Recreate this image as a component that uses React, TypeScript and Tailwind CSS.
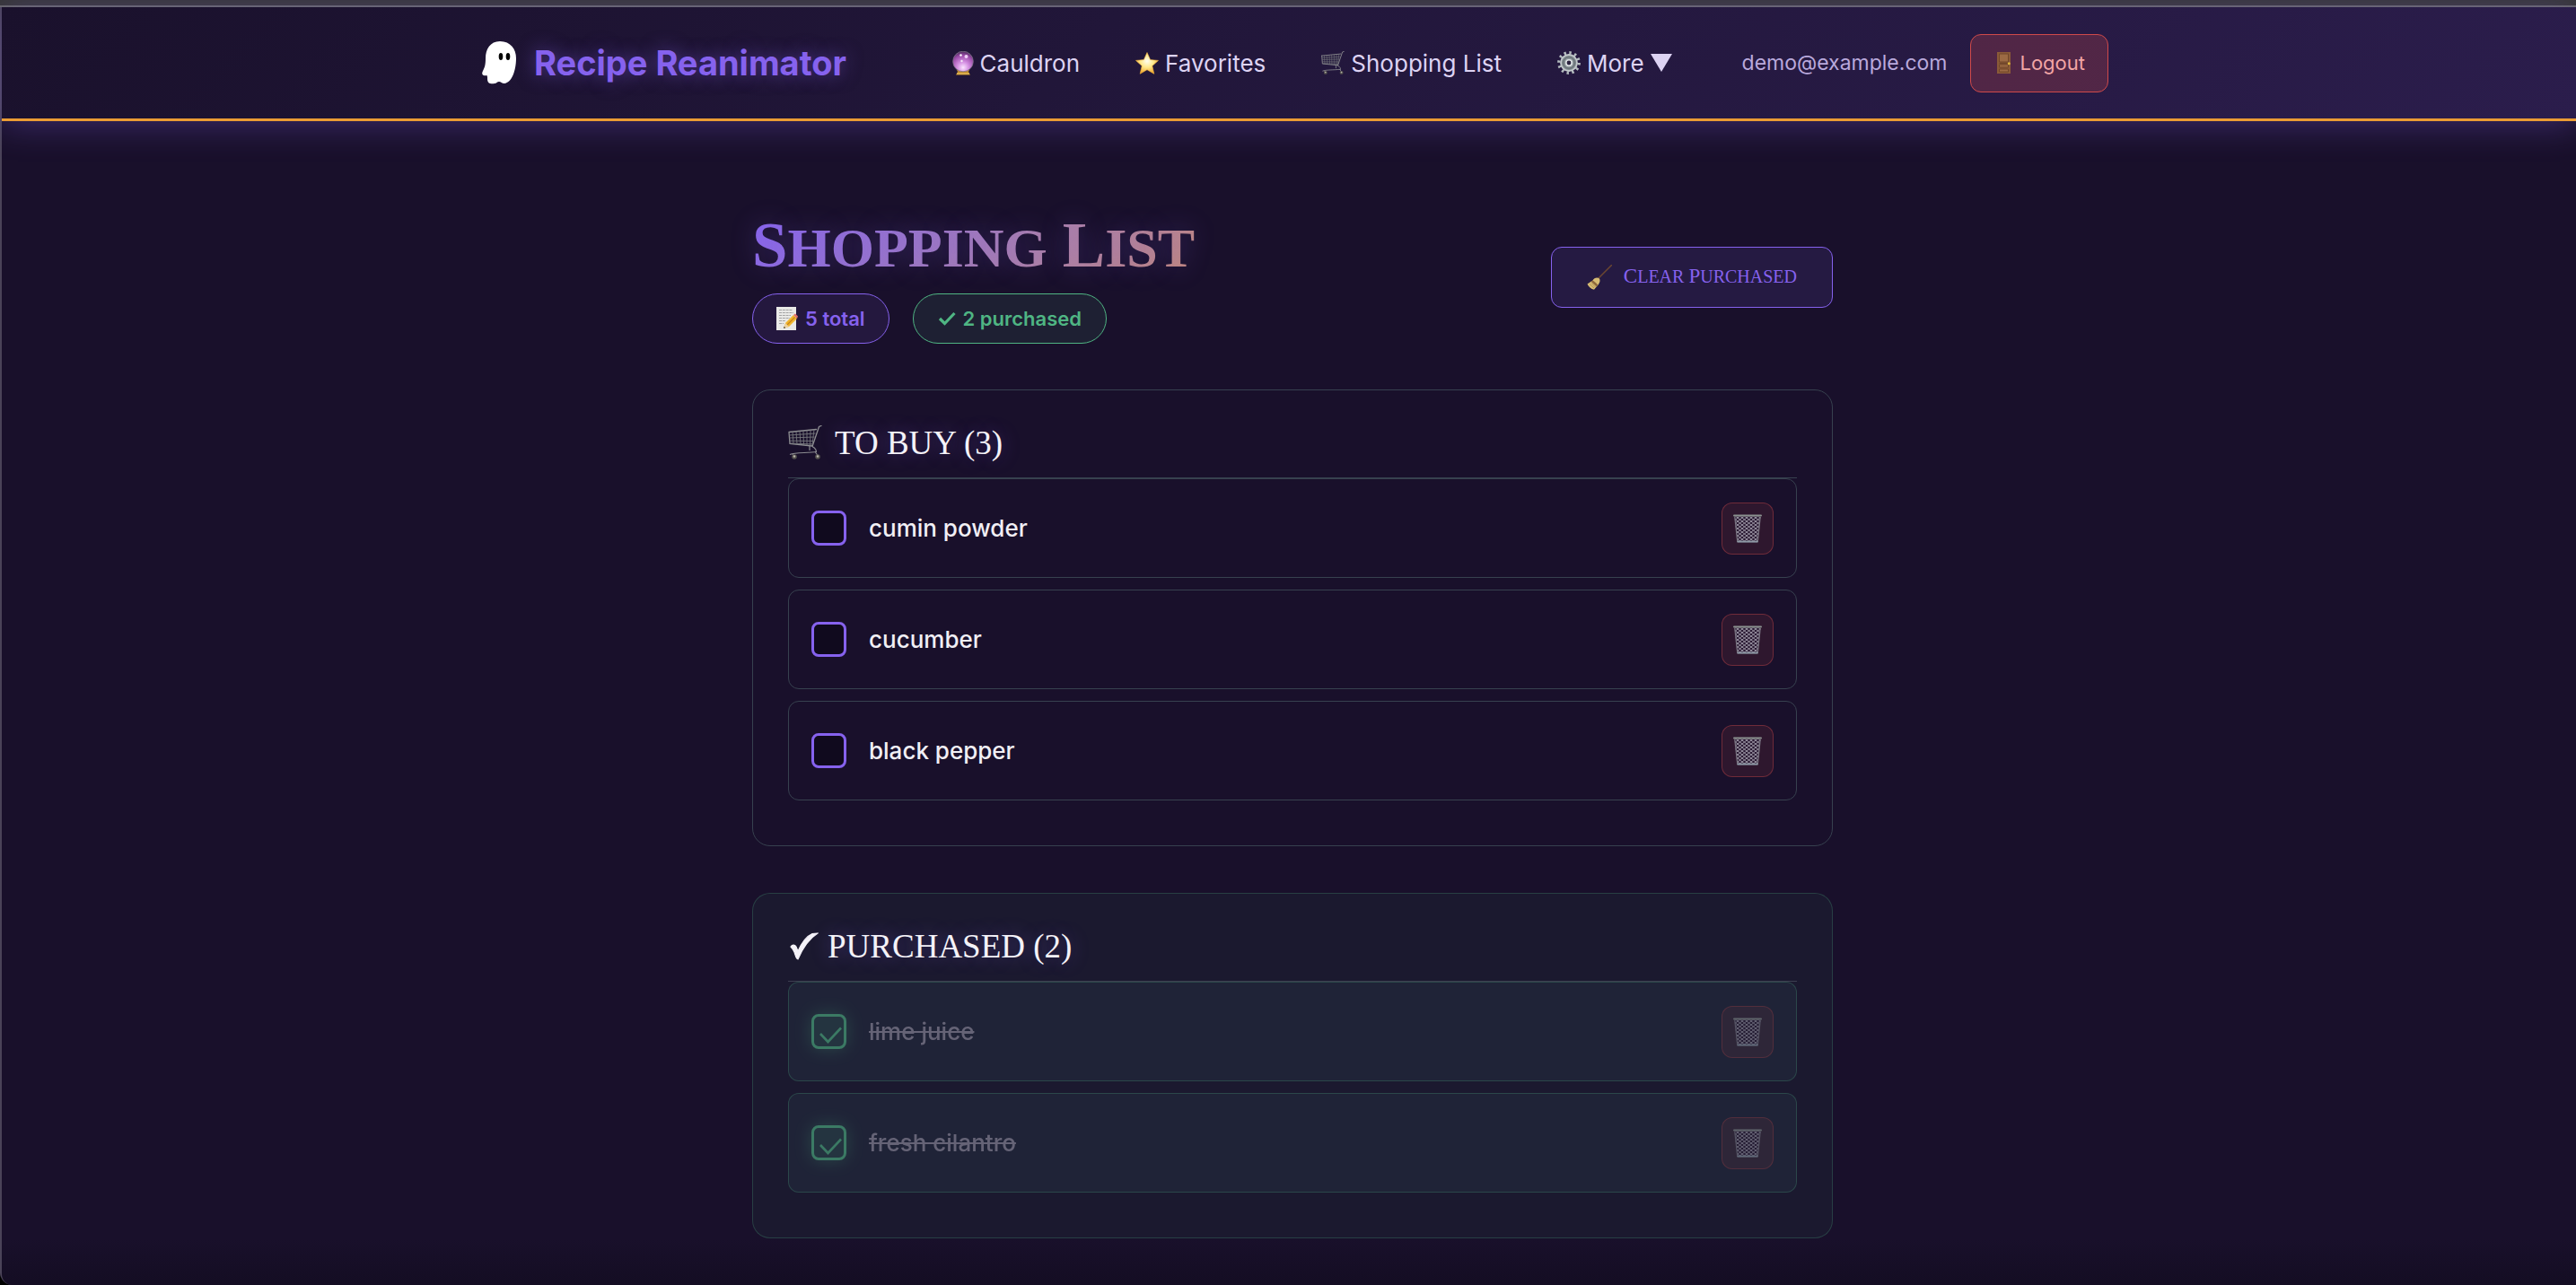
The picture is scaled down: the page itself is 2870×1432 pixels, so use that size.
const serif = "font-['Liberation_Serif',serif]";

const toBuy = ["cumin powder", "cucumber", "black pepper"];
const purchased = ["lime juice", "fresh cilantro"];

const GhostIcon = () => (
  <svg viewBox="0 0 38 48" className="h-[48px] w-[38px]" aria-hidden="true">
    <path
      d="M20 0C9 0 4 9 4 19c0 7-1 10-3 14-2 4 0 6 4 5 1 0 1 2 1 4 0 5 4 6 8 5 2 0 3-2 5-2s3 2 6 2c8-1 13-14 13-28C38 9 32 0 20 0Z"
      fill="#fff"
    />
    <ellipse cx="21" cy="17" rx="2.3" ry="4" fill="#050505" />
    <ellipse cx="29" cy="17" rx="2.3" ry="4" fill="#050505" />
  </svg>
);

const CrystalBallIcon = () => (
  <svg viewBox="0 0 24 27" className="h-[27px] w-[24px]" aria-hidden="true">
    <defs>
      <radialGradient id="ball" cx="0.5" cy="0.8" r="0.8">
        <stop offset="0" stopColor="#fbe4ff" />
        <stop offset="0.35" stopColor="#d48fe2" />
        <stop offset="0.75" stopColor="#9a4aa8" />
        <stop offset="1" stopColor="#4c2b5c" />
      </radialGradient>
    </defs>
    <path d="M5 21h14l-1 2 2 3.500H4L6 23Z" fill="#c08a2c" />
    <path d="M5 25h14" stroke="#f0cf6c" strokeWidth="1" />
    <circle cx="12" cy="11.500" r="11.300" fill="url(#ball)" stroke="#7d7488" strokeWidth="0.8" />
    <circle cx="9.500" cy="4.500" r="1.200" fill="#fff" />
    <circle cx="15.500" cy="6" r="2" fill="#f8dcff" opacity="0.9" />
    <circle cx="10.500" cy="11" r="1.200" fill="#fff" opacity="0.8" />
  </svg>
);

const StarIcon = () => (
  <svg viewBox="0 0 26 25" className="h-[25px] w-[26px]" aria-hidden="true">
    <defs>
      <radialGradient id="star" cx="0.5" cy="0.4" r="0.6">
        <stop offset="0" stopColor="#fffef0" />
        <stop offset="0.5" stopColor="#ffe88a" />
        <stop offset="1" stopColor="#f0a62c" />
      </radialGradient>
    </defs>
    <path
      d="M13 0.500 16.600 8.600 25.500 9.400 18.800 15.400 20.800 24.300 13 19.700 5.200 24.300 7.200 15.400 0.500 9.400 9.400 8.600Z"
      fill="url(#star)"
      stroke="#f3b440"
      strokeWidth="0.6"
      strokeLinejoin="round"
    />
  </svg>
);

const CartIcon = ({ className }: { className: string }) => (
  <svg viewBox="0 0 38 38" className={className} fill="none" aria-hidden="true">
    <path d="M1 7.500 31.500 4.500M1 7.500 2 20.500 27 23M37 0.500 34.500 1.500 27 23.500" stroke="#8e8e92" strokeWidth="1.300" strokeLinecap="round" />
    <path
      d="M5 7.200 6 21M9 6.800 10 21.300M13 6.400 14 21.600M17 6 17.500 22M21 5.600 21 22.300M25 5.200 24.500 22.700M29 4.800 27 22M1.300 11 30.500 9M1.500 14 29.500 13M1.800 17.200 28.300 17.500M2 20 27.500 21"
      stroke="#74757b"
      strokeWidth="0.9"
    />
    <path d="M27 23.500C31 26 32 28 31 30M24 23v5M2 32.500C8 30 20 31 32 29.500M5 32l2 3M30 29.500l3 4" stroke="#8b8b90" strokeWidth="1.200" />
    <circle cx="7" cy="35" r="2.800" fill="#55534f" />
    <circle cx="33" cy="35" r="2.800" fill="#55534f" />
    <circle cx="7" cy="34.500" r="1.200" fill="#b9b6ad" />
    <circle cx="33" cy="34.500" r="1.200" fill="#b9b6ad" />
  </svg>
);

const GearIcon = () => (
  <svg viewBox="0 0 26 26" className="size-[26px]" aria-hidden="true">
    <circle cx="13" cy="13" r="11.200" fill="none" stroke="#b4bcbf" strokeWidth="3.400" strokeDasharray="2.400 3.464" />
    <circle cx="13" cy="13" r="9" fill="#7e888d" stroke="#c2c9cb" strokeWidth="1.800" />
    <circle cx="13" cy="13" r="6.200" fill="#8d979b" stroke="#5d656b" strokeWidth="1" />
    <circle cx="13" cy="13" r="3.200" fill="#2c2440" stroke="#dfe4e6" strokeWidth="1.600" />
  </svg>
);

const DoorIcon = () => (
  <svg viewBox="0 0 15 24" className="mx-[4px] h-[24px] w-[15px]" aria-hidden="true">
    <path d="M0 0h15v24H0Z" fill="#8a5a38" />
    <path d="M2.500 2h10v9h-10ZM2.500 14h10v3h-10ZM2.500 19h10v3h-10Z" fill="#9c6a44" stroke="#6d4428" strokeWidth="0.9" />
    <path d="M2.500 12.500h10" stroke="#6d4428" strokeWidth="1" />
    <circle cx="13.300" cy="12.800" r="1.500" fill="#e0b63c" />
  </svg>
);

const MemoIcon = () => (
  <svg viewBox="0 0 24 26" className="h-[26px] w-[24px]" aria-hidden="true">
    <path d="M0 0h22v26H0Z" fill="#e9e9e7" />
    <path d="M3 3.500h15M3 6.500h16M3 9.500h13M3 12.500h12M3 15.500h7M3 18.500h5" stroke="#a4a4a4" strokeWidth="1" strokeDasharray="3 0.8" />
    <path d="M8 24 10 18 19 9 23 13 14 22Z" fill="#f0b52e" />
    <path d="M11.500 20.500 20.500 11.500" stroke="#c98518" strokeWidth="1.200" />
    <path d="M8 24 10 18 14 22Z" fill="#ecd2a0" />
    <path d="M8 24 8.700 21.800 10.200 23.300Z" fill="#333" />
    <path d="m19 9 2-1.500 3 3L23 13Z" fill="#e0706c" />
  </svg>
);

const BroomIcon = () => (
  <svg viewBox="0 0 28 28" className="size-[28px]" aria-hidden="true">
    <path d="M27.500 0.500 12 16" stroke="#6b4630" strokeWidth="1.500" strokeLinecap="round" />
    <path d="M14 15.500C11 13.500 8 15 6.500 17.500L0.500 21.500C2 24.500 4.500 27 8 27.800L12.500 22.500C14.500 20 15 17.500 14 15.500Z" fill="#d8bd74" />
    <path d="M6.500 17.500C8 18.500 11 21 12.500 22.500L10.800 24.500 4.500 18.800Z" fill="#8f6a3c" />
    <path d="M3 21.500 8 26M5 20.500 9.500 25" stroke="#a88c4c" strokeWidth="0.8" />
  </svg>
);

const TrashIcon = () => (
  <svg viewBox="0 0 32 32" className="size-[32px]" aria-hidden="true">
    <defs>
      <pattern id="mesh" width="5" height="4" patternUnits="userSpaceOnUse">
        <path d="M0 0 5 4M5 0 0 4" stroke="#9a94a3" strokeWidth="1" />
      </pattern>
    </defs>
    <path d="M1.500 2.500h29L27.500 31h-23Z" fill="#2a1a33" />
    <path d="M1.500 2.500h29L27.500 31h-23Z" fill="url(#mesh)" />
    <path d="M1.800 3 4.800 31M30.200 3 27.200 31" stroke="#77727f" strokeWidth="1.300" />
    <path d="M1 1.500h30" stroke="#8b918f" strokeWidth="2" strokeLinecap="round" />
    <path d="M4.500 30.600h23" stroke="#8e99a6" strokeWidth="2" />
  </svg>
);

const NavLink = ({ icon, children }: { icon: React.ReactNode; children: React.ReactNode }) => (
  <a href="#" className="flex items-center gap-[7px]">
    {icon}
    {children}
  </a>
);

const ItemRow = ({ name, done = false }: { name: string; done?: boolean }) => (
  <li
    className={
      done
        ? "mb-[13px] flex h-[111px] items-center rounded-xl border border-[#4fb583]/25 bg-[#1f2337] px-[25px]"
        : "mb-[13px] flex h-[111px] items-center rounded-xl border border-[#37414f] px-[25px]"
    }
  >
    <label className={done ? "flex flex-1 items-center gap-[25px] opacity-60" : "flex flex-1 items-center gap-[25px]"}>
      <span className="grid size-[39px]">
        <input
          type="checkbox"
          defaultChecked={done}
          className="col-start-1 row-start-1 appearance-none rounded-lg border-3 border-[#8662ee] bg-[#100a1e] checked:border-[#4fb583] checked:bg-[#4fb583]/20 checked:shadow-[0_0_20px_rgba(79,181,131,0.4)]"
        />
        {done && (
          <svg viewBox="0 0 39 39" className="pointer-events-none col-start-1 row-start-1" fill="none" aria-hidden="true">
            <path d="m10 22 8.500 9L33 15.500" stroke="#4fb583" strokeWidth="2.600" />
          </svg>
        )}
      </span>
      <span className={done ? "text-[26px] font-medium text-[#948ea0] line-through" : "text-[26px] font-medium text-[#f1eff5]"}>
        {name}
      </span>
    </label>
    <button
      type="button"
      aria-label={`Delete ${name}`}
      className={
        done
          ? "grid size-[58px] place-items-center rounded-xl border border-[#d04a4a]/40 bg-[#d04a4a]/15 opacity-60"
          : "grid size-[58px] place-items-center rounded-xl border border-[#d04a4a]/40 bg-[#d04a4a]/12"
      }
    >
      <TrashIcon />
    </button>
  </li>
);

const App = () => {
  return (
    <div className="bg-black font-['Inter',sans-serif]">
      <div className="flex min-h-screen flex-col rounded-bl-[14px] border-l-2 border-[#4a4358] bg-[#19102b]">
        <div className="-ml-[2px] h-[8px] border-b-2 border-[#656565] bg-[#353535]" />

        {/* Header */}
        <header className="flex h-[127px] justify-center border-b-3 border-[#eb9c34] bg-linear-135 from-[#1a112c] to-[#2b1d4c] pl-[14px] shadow-[0_4px_36px_rgba(134,98,238,0.32)]">
          <div className="flex w-full max-w-[1812px] items-center">
            <a href="#" className="flex items-center gap-[20px] text-[38px] font-bold text-[#8662ee] [text-shadow:0_0_20px_rgba(134,98,238,0.5)]">
              <GhostIcon />
              Recipe Reanimator
            </a>
            <nav className="ml-auto flex items-center gap-[62px] text-[26px] text-[#ddd3f3]">
              <NavLink icon={<CrystalBallIcon />}>Cauldron</NavLink>
              <NavLink icon={<StarIcon />}>Favorites</NavLink>
              <NavLink icon={<CartIcon className="size-[26px]" />}>Shopping List</NavLink>
              <button type="button" className="flex items-center gap-[7px]">
                <GearIcon />
                More
                <svg viewBox="0 0 24 20" className="h-[20px] w-[24px]" aria-hidden="true">
                  <path d="M0 0h24L12 20Z" fill="#ddd3f3" />
                </svg>
              </button>
            </nav>
            <span className="ml-[78px] text-[23px] text-[#b9a9dc]">demo@example.com</span>
            <button
              type="button"
              className="ml-[26px] flex h-[65px] items-center gap-[6px] rounded-xl border border-[#d04a4a] bg-[#d04a4a]/25 px-[25px] text-[22px] text-[#f2a5a5]"
            >
              <DoorIcon />
              Logout
            </button>
          </div>
        </header>

        <div className="pl-[8px]">
          <main className="mx-auto w-full max-w-[1204px] pt-[99px]">
            {/* Title and stats */}
            <div className="flex items-center justify-between">
              <div>
                <h1
                  className={`${serif} flex items-baseline gap-[17px] bg-linear-135 from-[#8662ee] to-[#c38878] bg-clip-text text-[62px] leading-[78px] font-bold text-transparent uppercase [text-shadow:0_0_30px_rgba(134,98,238,0.3)]`}
                >
                  <span className="block first-letter:text-[71px]">Shopping</span>{" "}
                  <span className="block first-letter:text-[71px]">List</span>
                </h1>
                <div className="mt-[12px] flex gap-[26px] text-[22px] font-semibold">
                  <span className="flex h-[56px] items-center gap-[8px] rounded-full border border-[#8662ee] bg-[#8662ee]/10 px-[26px] text-[#8662ee]">
                    <MemoIcon />5 total
                  </span>
                  <span className="flex h-[56px] items-center gap-[8px] rounded-full border border-[#4fb583] bg-[#4fb583]/10 px-[27px] text-[#4fb583]">
                    <svg viewBox="0 0 20 16" className="h-[16px] w-[20px]" fill="none" aria-hidden="true">
                      <path d="m2 8 5.500 5.500L18.500 2" stroke="#4fb583" strokeWidth="3.200" />
                    </svg>
                    2 purchased
                  </span>
                </div>
              </div>
              <button
                type="button"
                className={`${serif} flex h-[68px] items-center gap-[13px] rounded-xl border border-[#8662ee] bg-[#8662ee]/12 px-[39px] text-[20px] text-[#8662ee] uppercase`}
              >
                <BroomIcon />
                <span className="flex items-baseline gap-[5px]">
                  <span className="block first-letter:text-[23px]">Clear</span>{" "}
                  <span className="block first-letter:text-[23px]">Purchased</span>
                </span>
              </button>
            </div>

            {/* To buy */}
            <section className="mt-[51px] rounded-[20px] border border-[#37414f] px-[39px] pt-[39px] pb-[37px]">
              <h2
                className={`${serif} flex h-[59px] items-start gap-[14px] border-b border-[#37414f] text-[37px] leading-[40px] text-[#f4f2f8] uppercase [text-shadow:0_0_20px_rgba(134,98,238,0.4)]`}
              >
                <CartIcon className="size-[38px]" />
                To Buy (3)
              </h2>
              <ul>
                {toBuy.map((name) => (
                  <ItemRow key={name} name={name} />
                ))}
              </ul>
            </section>

            {/* Purchased */}
            <section className="mt-[52px] rounded-[20px] border border-[#4fb583]/25 bg-[#1b192f] px-[39px] pt-[39px] pb-[37px]">
              <h2
                className={`${serif} flex h-[59px] items-start gap-[10px] border-b border-[#3c3f50] text-[37px] leading-[40px] text-[#f4f2f8] uppercase [text-shadow:0_0_20px_rgba(134,98,238,0.4)]`}
              >
                <svg viewBox="0 0 34 38" className="h-[38px] w-[34px]" aria-hidden="true">
                  <path d="M3 20C5 17 8 18 9 20L11 25C15 16 21 8 27 5.500 29 5 31 5 33 5 25 10 17 20 11 34 9 34 8 29 7 26 6 23 5 22 3 20Z" fill="#f4f2f8" stroke="#f4f2f8" strokeWidth="1.200" />
                </svg>
                Purchased (2)
              </h2>
              <ul>
                {purchased.map((name) => (
                  <ItemRow key={name} name={name} done />
                ))}
              </ul>
            </section>
          </main>
        </div>

        <div className="min-h-[48px] flex-1 rounded-bl-[12px] bg-linear-to-b from-transparent to-[#140d23]" />
      </div>
    </div>
  );
};

export default App;
